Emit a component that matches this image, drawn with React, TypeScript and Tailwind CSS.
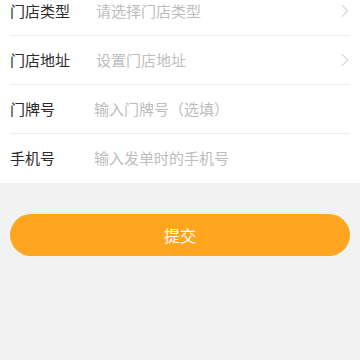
import { ChevronRight } from "lucide-react";

type Row = { label: string; placeholder: string; arrow?: boolean; indent: string };

const rows: Row[] = [
  { label: "门店类型", placeholder: "请选择门店类型", arrow: true, indent: "w-[86px]" },
  { label: "门店地址", placeholder: "设置门店地址", arrow: true, indent: "w-[86px]" },
  { label: "门牌号", placeholder: "输入门牌号（选填）", indent: "w-[84px]" },
  { label: "手机号", placeholder: "输入发单时的手机号", indent: "w-[84px]" },
];

export default function App() {
  return (
    <div
      className="w-[360px] h-[360px] overflow-hidden bg-[#f2f2f2]"
      style={{ fontFamily: '"Noto Sans CJK SC", "Noto Sans", sans-serif' }}
    >
      {/* 表单区域 */}
      <div className="bg-white pl-[10px] pr-[10px] -mt-[13px]">
        {rows.map((row, i) => (
          <div
            key={row.label}
            className={`flex items-center h-[49px] ${i < rows.length - 1 ? "border-b border-[#ececec]" : ""}`}
          >
            <span className={`${row.indent} shrink-0 text-[15px] text-[#2b2b2b]`}>{row.label}</span>
            <span className="flex-1 text-[15px] text-[#bdbdbd]">{row.placeholder}</span>
            {row.arrow && (
              <ChevronRight className="w-[22px] h-[22px] text-[#c8c8c8] -mr-[6px]" strokeWidth={1.1} />
            )}
          </div>
        ))}
      </div>
      <div className="px-[10px] pt-[31px]">
        <button className="w-full h-[42px] rounded-full bg-[#ffa51f] text-white text-[16px]">提交</button>
      </div>
    </div>
  );
}
